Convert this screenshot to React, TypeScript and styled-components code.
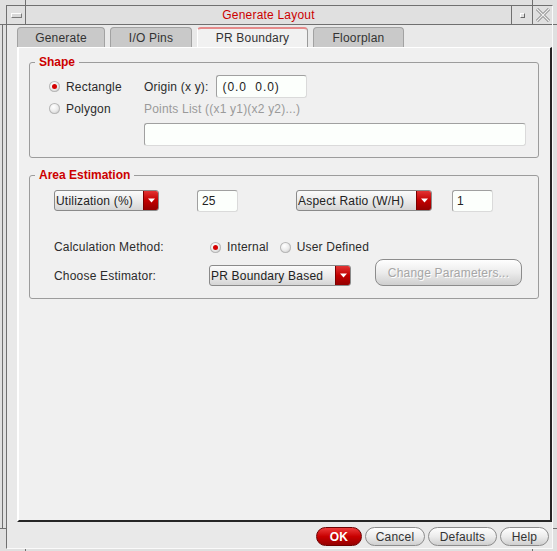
import React from "react";
import styled, { createGlobalStyle } from "styled-components";

const GlobalStyle = createGlobalStyle`
  html, body { margin: 0; padding: 0; background: #e0e0e0; }
  body {
    font-family: "Liberation Sans", Arial, sans-serif;
    font-size: 12px;
    letter-spacing: 0.2px;
    color: #2b2b2b;
  }
  * { box-sizing: border-box; }
`;

const frameLine = "#707070";
const line = (x: number, y: number, w: number, h: number) =>
  `linear-gradient(${frameLine}, ${frameLine}) ${x}px ${y}px / ${w}px ${h}px no-repeat`;

const Window = styled.div`
  width: 557px;
  height: 551px;
  padding: 5px 4px 2px 6px;
  display: flex;
  background: ${line(2, 24, 1, 504)}, ${line(0, 24, 6, 1)}, ${line(0, 528, 6, 1)},
    ${line(553, 24, 4, 1)}, ${line(553, 528, 4, 1)}, ${line(25, 0, 1, 5)},
    ${line(532, 0, 1, 5)}, ${line(25, 549, 1, 2)}, ${line(532, 549, 1, 2)}, #e0e0e0;
`;

const Client = styled.div`
  flex: 1;
  display: flex;
  flex-direction: column;
  border-left: 1px solid ${frameLine};
  border-top: 1px solid ${frameLine};
  border-right: 1px solid #fafafa;
  border-bottom: 1px solid #fafafa;
`;

const TitleBar = styled.div`
  height: 19px;
  display: flex;
  border-bottom: 1px solid ${frameLine};
  background: #e0e0e0;
`;

const TitleButton = styled.div<{ $w: number; $side: "left" | "right" }>`
  width: ${(p) => p.$w}px;
  display: flex;
  align-items: center;
  justify-content: center;
  ${(p) =>
    p.$side === "left"
      ? `border-right: 1px solid ${frameLine};`
      : `border-left: 1px solid ${frameLine};`}
`;

const MenuGlyph = styled.span`
  width: 11px;
  height: 5px;
  margin-top: 1px;
  border: 1px solid;
  border-color: #fdfdfd #7a7a7a #7a7a7a #fdfdfd;
  background: #d8d8d8;
`;

const MinGlyph = styled.span`
  width: 5px;
  height: 5px;
  margin-top: 1px;
  border: 1px solid;
  border-color: #fdfdfd #6a6a6a #6a6a6a #fdfdfd;
`;

const Title = styled.div`
  flex: 1;
  text-align: center;
  line-height: 18px;
  color: #cc0000;
`;

const Body = styled.div`
  flex: 1;
  display: flex;
  flex-direction: column;
  padding: 2px 0 0 10px;
  background: #e9e9e9;
`;

const TabRow = styled.div`
  height: 20px;
  display: flex;
  gap: 5px;
`;

const Tab = styled.div<{ $active?: boolean; $w: number }>`
  width: ${(p) => p.$w}px;
  flex: none;
  height: 20px;
  display: flex;
  align-items: center;
  justify-content: center;
  border: 1px solid #a2a2a2;
  border-bottom: none;
  border-radius: 4px 4px 0 0;
  background: ${(p) => (p.$active ? "#f1f1f1" : "#c9c9c9")};
  color: #333;
  ${(p) =>
    p.$active &&
    `border-color: #e58a8a #9a9a9a #9a9a9a #ffffff; border-top-width: 2px;`}
`;

const Panel = styled.div`
  flex: 1;
  display: flex;
  flex-direction: column;
  padding: 7px 11px 0 10px;
  background: #f0f0f0;
  border-style: solid;
  border-width: 1px 2px 2px 2px;
  border-color: #ffffff #262626 #262626 #ffffff;
`;

const Group = styled.fieldset<{ $gap?: number }>`
  margin: ${(p) => p.$gap ?? 0}px 0 0 0;
  padding: 0;
  border: 1px solid #9c9c9c;
  border-radius: 3px;
  min-width: 0;
`;

const Legend = styled.legend`
  margin-left: 5px;
  padding: 0 4px;
  line-height: 14px;
  font-weight: bold;
  letter-spacing: 0;
  color: #cc0000;
`;

const ShapeGrid = styled.div`
  display: grid;
  grid-template-columns: 95px 1fr;
  grid-template-rows: 23px 21px auto;
  padding: 6px 0 11px 19px;
  align-items: center;
`;

const Radio = styled.label`
  display: flex;
  align-items: center;
  gap: 6px;
  white-space: nowrap;
`;

const RadioCircle = styled.span<{ $checked?: boolean }>`
  width: 11px;
  height: 11px;
  border-radius: 50%;
  display: inline-flex;
  align-items: center;
  justify-content: center;
  background: radial-gradient(circle at 40% 35%, #ffffff 0%, #ececec 45%, #bcbcbc 100%);
  box-shadow: inset 0 0 0 1px #b8b8b8;
  &::after {
    content: "";
    width: 5px;
    height: 5px;
    border-radius: 50%;
    background: #d40000;
    display: ${(p) => (p.$checked ? "block" : "none")};
  }
`;

const FieldLine = styled.div`
  display: flex;
  align-items: center;
  gap: 7px;
`;

const Muted = styled.span`
  color: #9a9a9a;
  white-space: nowrap;
`;

const TextBox = styled.div<{ $w: number; $h?: number; $span?: boolean; $top?: number; $spread?: boolean }>`
  width: ${(p) => p.$w}px;
  height: ${(p) => p.$h ?? 22}px;
  margin-top: ${(p) => p.$top ?? 0}px;
  ${(p) => (p.$span ? "grid-column: 2;" : "")}
  display: flex;
  align-items: center;
  padding-left: ${(p) => (p.$spread ? 6 : 4)}px;
  background: #fcfffc;
  border: 1px solid;
  border-color: #a0a0a0 #dadada #dadada #a0a0a0;
  border-radius: 3px;
  white-space: pre;
  letter-spacing: ${(p) => (p.$spread ? "0.9px" : "0.2px")};
  color: #222;
`;

const AreaBody = styled.div`
  display: flex;
  flex-direction: column;
  padding: 8px 0 12px 24px;
`;

const ControlRow = styled.div`
  display: flex;
  align-items: flex-start;
  height: 22px;
`;

const Spacer = styled.span<{ $w: number }>`
  width: ${(p) => p.$w}px;
  flex: none;
`;

const Select = styled.div<{ $w: number }>`
  width: ${(p) => p.$w}px;
  height: 21px;
  display: flex;
  border: 1px solid #8a8a8a;
  border-radius: 3px;
  overflow: hidden;
  background: linear-gradient(#fbfbfb, #ebebeb 50%, #d5d5d5);
  color: #222;
`;

const SelectText = styled.span`
  flex: 1;
  display: flex;
  align-items: center;
  padding-left: 1px;
  white-space: nowrap;
`;

const SelectArrow = styled.span`
  width: 15px;
  display: flex;
  align-items: center;
  justify-content: center;
  border-left: 1px solid #7a0000;
  background: linear-gradient(#e23434, #c20000 50%, #930000);
`;

const FormGrid = styled.div<{ $top: number; $h: number; $align: string }>`
  display: grid;
  grid-template-columns: 155px auto auto 1fr;
  margin-top: ${(p) => p.$top}px;
  height: ${(p) => p.$h}px;
  align-items: ${(p) => p.$align};
`;

const RowLabel = styled.span`
  height: 21px;
  display: flex;
  align-items: center;
  white-space: nowrap;
`;

const RadioGroup = styled.div`
  display: flex;
  align-items: center;
  gap: 11px;
  padding-left: 1px;
`;

const PillButton = styled.button<{ $w: number; $h?: number; $primary?: boolean; $disabled?: boolean; $left?: number }>`
  width: ${(p) => p.$w}px;
  height: ${(p) => p.$h ?? 19}px;
  margin-left: ${(p) => p.$left ?? 0}px;
  padding: 0;
  font-family: inherit;
  font-size: 12px;
  letter-spacing: 0.2px;
  border-radius: ${(p) => ((p.$h ?? 19) > 20 ? 8 : 10)}px;
  border: 1px solid ${(p) => (p.$primary ? "#6e0000" : "#8c8c8c")};
  background: ${(p) =>
    p.$primary
      ? "linear-gradient(#ec3a3a, #c80000 50%, #950000)"
      : "linear-gradient(#fefefe, #ececec 50%, #cfcfcf)"};
  color: ${(p) => (p.$primary ? "#ffffff" : p.$disabled ? "#a6a6a6" : "#333")};
  font-weight: ${(p) => (p.$primary ? "bold" : "normal")};
  ${(p) => (p.$disabled ? "text-shadow: 1px 1px 0 #ffffff;" : "")}
`;

const ButtonBar = styled.div`
  height: 26px;
  display: flex;
  justify-content: flex-end;
  align-items: flex-start;
  gap: 3px;
  padding: 5px 3px 0 0;
`;

const Arrow = () => (
  <svg width="7" height="5" viewBox="0 0 7 5">
    <path d="M0 0.5h7L3.5 4.5z" fill="#ffffff" />
  </svg>
);

const CloseX = () => (
  <svg width="16" height="14" viewBox="0 0 16 14">
    <path d="M2 1L14 13M14 1L2 13" stroke="#8a8a8a" strokeWidth="3" fill="none" />
    <path d="M2 1L14 13M14 1L2 13" stroke="#efefef" strokeWidth="1.2" fill="none" />
  </svg>
);

const Dropdown = ({ w, text }: { w: number; text: string }) => (
  <Select $w={w}>
    <SelectText>{text}</SelectText>
    <SelectArrow>
      <Arrow />
    </SelectArrow>
  </Select>
);

const RadioOption = ({ checked, label, muted }: { checked?: boolean; label: string; muted?: boolean }) => (
  <Radio>
    <RadioCircle $checked={checked} />
    {muted ? <Muted>{label}</Muted> : <span>{label}</span>}
  </Radio>
);

export default function App() {
  return (
    <>
      <GlobalStyle />
      <Window>
        <Client>
          <TitleBar>
            <TitleButton $w={19} $side="left">
              <MenuGlyph />
            </TitleButton>
            <Title>Generate Layout</Title>
            <TitleButton $w={21} $side="right">
              <MinGlyph />
            </TitleButton>
            <TitleButton $w={20} $side="right">
              <CloseX />
            </TitleButton>
          </TitleBar>
          <Body>
            <TabRow>
              <Tab $w={88}>Generate</Tab>
              <Tab $w={82}>I/O Pins</Tab>
              <Tab $w={111} $active>PR Boundary</Tab>
              <Tab $w={91}>Floorplan</Tab>
            </TabRow>
            <Panel>
              <Group>
                <Legend>Shape</Legend>
                <ShapeGrid>
                  <RadioOption checked label="Rectangle" />
                  <FieldLine>
                    <span>Origin (x y):</span>
                    <TextBox $w={91} $h={23} $spread>{"(0.0  0.0)"}</TextBox>
                  </FieldLine>
                  <RadioOption label="Polygon" />
                  <Muted>Points List ((x1 y1)(x2 y2)...)</Muted>
                  <TextBox $w={382} $h={23} $span $top={4} />
                </ShapeGrid>
              </Group>
              <Group $gap={10}>
                <Legend>Area Estimation</Legend>
                <AreaBody>
                  <ControlRow>
                    <Dropdown w={105} text="Utilization (%)" />
                    <Spacer $w={38} />
                    <TextBox $w={41}>25</TextBox>
                    <Spacer $w={58} />
                    <Dropdown w={136} text="Aspect Ratio (W/H)" />
                    <Spacer $w={20} />
                    <TextBox $w={41}>1</TextBox>
                  </ControlRow>
                  <FormGrid $top={25} $h={20} $align="center">
                    <span>Calculation Method:</span>
                    <RadioGroup>
                      <RadioOption checked label="Internal" />
                      <RadioOption label="User Defined" />
                    </RadioGroup>
                  </FormGrid>
                  <FormGrid $top={2} $h={27} $align="end">
                    <RowLabel>Choose Estimator:</RowLabel>
                    <Dropdown w={142} text="PR Boundary Based" />
                    <PillButton $w={147} $h={27} $disabled $left={24}>
                      Change Parameters...
                    </PillButton>
                  </FormGrid>
                </AreaBody>
              </Group>
            </Panel>
            <ButtonBar>
              <PillButton $w={46} $primary>OK</PillButton>
              <PillButton $w={60}>Cancel</PillButton>
              <PillButton $w={69}>Defaults</PillButton>
              <PillButton $w={49}>Help</PillButton>
            </ButtonBar>
          </Body>
        </Client>
      </Window>
    </>
  );
}
